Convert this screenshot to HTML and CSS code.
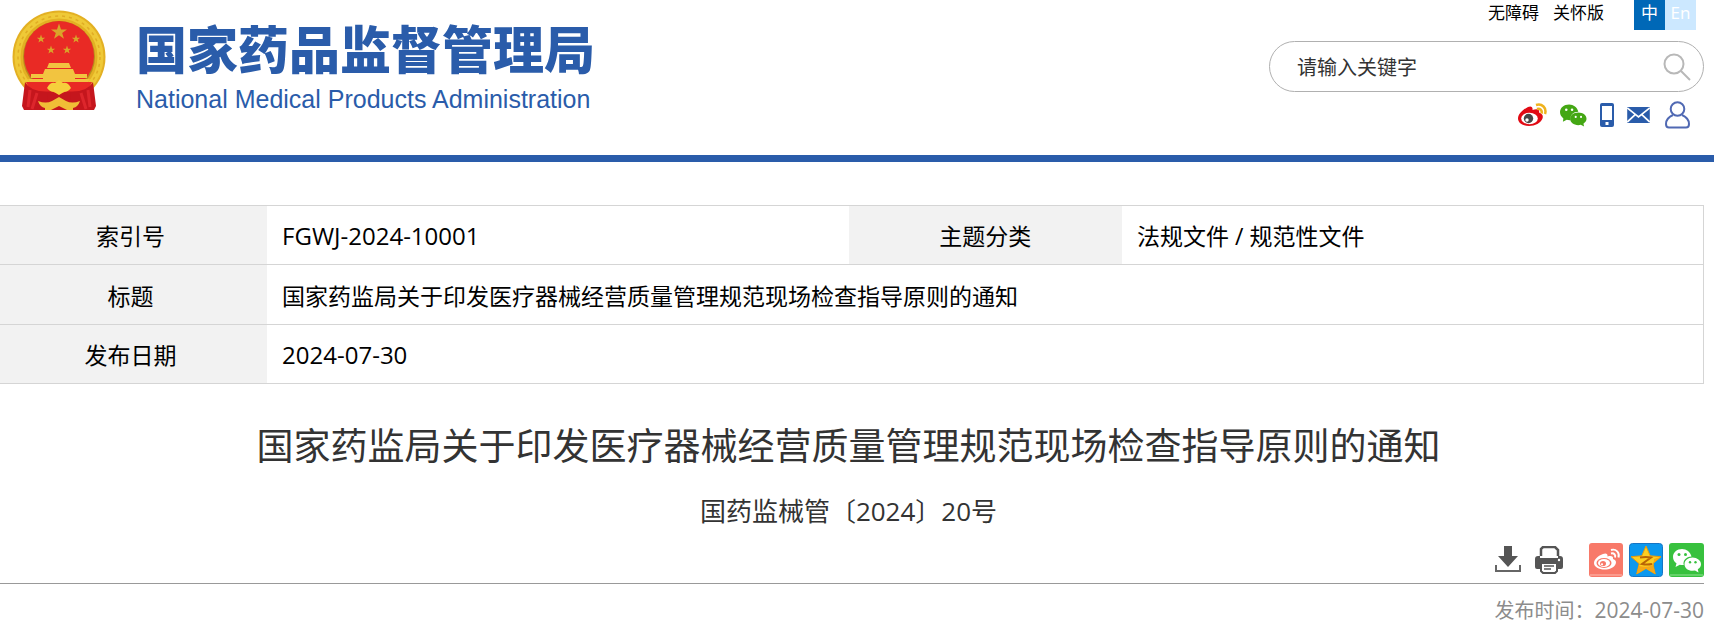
FILE: index.html
```html
<!DOCTYPE html>
<html lang="zh-CN">
<head>
<meta charset="utf-8">
<title>国家药监局关于印发医疗器械经营质量管理规范现场检查指导原则的通知</title>
<link rel="stylesheet" href="styles.css">
</head>
<body>
<header class="site-header">
  <a class="brand" href="#">
    <svg class="emblem" viewBox="0 0 94 102" aria-hidden="true">
      <defs>
        <path id="star" d="M0-10 2.4-3.1 9.5-3.1 3.8 1.2 5.9 8.1 0 4-5.9 8.1-3.8 1.2-9.5-3.1-2.4-3.1Z"/>
      </defs>
      <circle cx="47" cy="47" r="46.5" fill="#e3b023"/>
      <circle cx="47" cy="47" r="41.500" fill="none" stroke="#efc937" stroke-width="6"/>
      <circle cx="47" cy="47" r="41" fill="none" stroke="#e0ac25" stroke-width="1.500" stroke-dasharray="3 4"/>
      <circle cx="47" cy="47" r="36" fill="#b98a1c"/>
      <circle cx="47" cy="46" r="35" fill="#e92a25"/>
      <g fill="#d9a52a">
        <use href="#star" transform="translate(47 22) scale(.84)"/>
        <use href="#star" transform="translate(29 29) scale(.44)"/>
        <use href="#star" transform="translate(64 29) scale(.44)"/>
        <use href="#star" transform="translate(39 40) scale(.44)"/>
        <use href="#star" transform="translate(55 40) scale(.44)"/>
      </g>
      <path d="M37 53h20l2 5H35zM33 59h28l2 5H31zM31 64h32v6H31zM19 64h56v4H19zM16 69h62l-2 3H18z" fill="#f2c440"/>
      <path d="M14 72h66l-6 12H20z" fill="#e92a25"/>
      <path d="M13 72q7 12 29 9l-4 19H12l-2-4z" fill="#c5161d"/>
      <path d="M81 72q-7 12-29 9l4 19h26l2-4z" fill="#c5161d"/>
      <path d="M18 80l-2 17M25 83l-5 16M69 83l5 16M76 80l2 17" stroke="#dd262c" stroke-width="3" fill="none"/>
      <path d="M36 83h22l2 17H34z" fill="#c5161d"/>
      <path d="M35 78q3-6 8-5l4-3 4 3q5-1 8 5-3 4-7 4l-5 3-5-3q-4 0-7-4z" fill="#f6cf3c"/>
      <path d="M26 91q8 3 14 0l7-4 7 4q6 3 14 0-2 6-7 7v2h-6l-8-4-8 4h-6v-2q-5-1-7-7z" fill="#f0bd36"/>
    </svg>
    <span class="brand-text">
      <span class="brand-cn">国家药品监督管理局</span>
      <span class="brand-en">National Medical Products Administration</span>
    </span>
  </a>
  <div class="tools">
    <nav class="top-links">
      <a href="#">无障碍</a>
      <a href="#">关怀版</a>
      <span class="langs"><a class="lang lang-on" href="#">中</a><a class="lang" href="#">En</a></span>
    </nav>
    <form class="search">
      <input class="search-input" type="text" placeholder="请输入关键字" aria-label="请输入关键字">
      <button class="search-btn" type="button" aria-label="搜索">
        <svg width="28" height="28" viewBox="0 0 28 28" fill="none" stroke="#b8b8b8" stroke-width="2"><circle cx="11" cy="11" r="9.5"/><path d="M18 18l9 9"/></svg>
      </button>
    </form>
    <nav class="social">
      <a href="#" aria-label="微博"><svg width="29" height="24" viewBox="0 0 29 24"><path d="M10 4c3-1.500 5 0 4.500 3 4-1.500 7.500-1 6.500 2.500 3 1 4.500 3 3.500 6C23 20 17 23 11 23 5 23 0 20 0 15.500 0 11 5 6.500 10 4z" fill="#e10a14"/><ellipse cx="11.500" cy="15.500" rx="8.300" ry="5.800" fill="#fff"/><circle cx="10.500" cy="15.500" r="4.700" fill="#484848"/><circle cx="9" cy="17" r="1.700" fill="#fff"/><path d="M18 2c6-2 11 3 9 9M19 6c3-1 5.500 1.500 4.500 4.500" fill="none" stroke="#efb21d" stroke-width="2.500"/></svg></a>
      <a href="#" aria-label="微信"><svg width="27" height="24" viewBox="0 0 28 24"><path d="M9.500 1C4 1 0 4.500 0 9c0 3 1.500 5 3.500 6.500L3 19l4-2q2 .5 4 .3C10 12 14 8.500 19 8.500 18 4 14 1 9.500 1z" fill="#44a714"/><path d="M19 9.500c-5 0-8.500 3-8.500 6.500s3.500 6.500 8.500 6.500l2.500-.3L25 24l-.7-3c2-1.300 3.200-3 3.200-5 0-3.500-3.500-6.500-8.500-6.500z" fill="#44a714"/><g fill="#fff"><circle cx="6.500" cy="6.500" r="1.300"/><circle cx="12.500" cy="6.500" r="1.300"/><circle cx="16.300" cy="14" r="1.100"/><circle cx="21.800" cy="14" r="1.100"/></g></svg></a>
      <a href="#" aria-label="手机"><svg width="14" height="24" viewBox="0 0 14 24"><rect width="14" height="24" rx="2" fill="#2a5caa"/><path d="M2 3h10v14H2z" fill="#fff"/><rect x="5.500" y="19" width="3" height="3" fill="#fff"/></svg></a>
      <a href="#" aria-label="邮箱"><svg width="23" height="16" viewBox="0 0 24 17"><path d="M0 0h24v17H0z" fill="#2a5caa"/><path d="M0 1l12 9.500L24 1M0 16l8.500-8M24 16l-8.500-8" fill="none" stroke="#fff" stroke-width="1.800"/></svg></a>
      <a class="user" href="#" aria-label="个人中心"><svg width="25" height="28" viewBox="0 0 25 28" fill="none" stroke="#5069b3" stroke-width="2"><circle cx="12.500" cy="8" r="6.800"/><path d="M8 14C3.500 16 1 19 1 23c0 2.500 1 3.500 3 3.500h17c2 0 3-1 3-3.500 0-4-2.500-7-7-9"/></svg></a>
    </nav>
  </div>
</header>
<main class="content">
  <table class="meta">
    <tr><th scope="row">索引号</th><td class="latin">FGWJ-2024-10001</td><th scope="row">主题分类</th><td>法规文件 / 规范性文件</td></tr>
    <tr class="subject"><th scope="row">标题</th><td colspan="3">国家药监局关于印发医疗器械经营质量管理规范现场检查指导原则的通知</td></tr>
    <tr><th scope="row">发布日期</th><td class="latin" colspan="3">2024-07-30</td></tr>
  </table>
  <h1 class="title">国家药监局关于印发医疗器械经营质量管理规范现场检查指导原则的通知</h1>
  <p class="doc-no">国药监械管〔2024〕20号</p>
  <div class="actions">
    <button type="button" aria-label="下载"><svg width="26" height="28" viewBox="0 0 26 28"><path d="M9 0h8v10h6L13 21 3 10h6z" fill="#555"/><path d="M1 19v6h24v-6" fill="none" stroke="#666" stroke-width="2"/></svg></button>
    <button class="print" type="button" aria-label="打印"><svg width="28" height="28" viewBox="0 0 28 28"><path d="M6 10V3l2-2h12l3 3v6" fill="#fff" stroke="#555" stroke-width="2.500"/><path d="M3 10h2v2h18v-2h2q3 0 3 3v8q0 2-2 2h-3v-6H5v6H2q-2 0-2-2v-8q0-3 3-3z" fill="#555"/><path d="M6 17h16v8l-2 2H8l-2-2z" fill="#fff" stroke="#555" stroke-width="2"/><path d="M9 20h10M9 23h7" stroke="#555" stroke-width="1.500"/><circle cx="24" cy="14" r="1.200" fill="#fff"/></svg></button>
    <a href="#" aria-label="分享到微博"><svg width="34" height="34" viewBox="0 0 34 34"><rect width="34" height="34" rx="3" fill="#f87969"/><path d="M1 32h32" stroke="#fb9b8e" stroke-width="2"/><path d="M14 11c3-1.500 5 0 4.500 2.500 3.500-1 6-.5 5.500 2.500 2.500.8 3.500 2.500 2.800 4.500-1.300 4-6.300 6-11.300 6C10 26.500 5 24 5 20c0-3.500 4.500-7.500 9-9z" fill="#fff"/><ellipse cx="15" cy="20" rx="7.500" ry="5" fill="#f87969"/><ellipse cx="15" cy="20" rx="6" ry="4" fill="#fff"/><ellipse cx="14" cy="20.500" rx="3" ry="2.600" fill="#f87969"/><circle cx="13" cy="21.300" r="1.100" fill="#fff"/><path d="M22 7c5-1.500 9 2.500 7.500 7.500M22 10.500c3-.8 5 1.500 4 4" fill="none" stroke="#fff" stroke-width="1.900"/></svg></a>
    <a href="#" aria-label="分享到QQ空间"><svg width="34" height="34" viewBox="0 0 34 34"><rect x=".5" y=".5" width="33" height="33" rx="3" fill="#0c98ee" stroke="#1675c4"/><path d="M17 3l4.200 9.800L32 13.700l-8.200 7L26.300 31 17 25.500 7.700 31l2.500-10.300L2 13.700l10.800-.9z" fill="#fdce20" stroke="#e79a0b"/><path d="M25 16l6-2-7.200 6.700L26.300 31 17 25.500 7.700 31l2-8q9 2 15-1z" fill="#f6a816"/><path d="M11 14.500q6-1 11 0l-9 6.500q5 1 10 0" fill="none" stroke="#b96505" stroke-width="2"/></svg></a>
    <a href="#" aria-label="分享到微信"><svg width="35" height="34" viewBox="0 0 35 34"><rect width="35" height="34" rx="3" fill="#38c13e"/><path d="M1 32h33" stroke="#65d269" stroke-width="2"/><path d="M13 6C8 6 4 9.500 4 14c0 3 1.500 5 3.500 6.300L6.500 24l4.300-2.200q2 .4 4 .2C13.500 18 17 13.500 22.500 13.500 21.500 9 17.500 6 13 6z" fill="#fff"/><path d="M23.500 14.500c-4.500 0-8 3-8 6.700s3.500 6.600 8 6.600l2.500-.3 3.500 2-.7-3.200c2-1.200 3.200-3 3.200-5.100 0-3.700-4-6.700-8.500-6.700z" fill="#fff"/><g fill="#38c13e"><circle cx="10" cy="11.500" r="1.500"/><circle cx="16.500" cy="11.500" r="1.500"/><circle cx="21" cy="19.300" r="1.200"/><circle cx="26.500" cy="19.300" r="1.200"/></g></svg></a>
  </div>
  <p class="pub">发布时间：<time datetime="2024-07-30">2024-07-30</time></p>
</main>
</body>
</html>
```
FILE: styles.css
```css
* { box-sizing: border-box; }
body {
  margin: 0;
  background: #fff;
  color: #000;
  font-family: "Open Sans", "Noto Sans CJK SC", sans-serif;
  overflow-x: hidden;
}
a { color: inherit; text-decoration: none; }
svg { display: block; }
button { border: 0; padding: 0; background: none; cursor: pointer; }

.site-header {
  display: flex;
  justify-content: space-between;
  align-items: flex-start;
  min-height: 162px;
  padding: 0 10px 0 12px;
  border-bottom: 7px solid #2a5caa;
}
.brand { display: flex; gap: 30px; padding-top: 10px; color: #2a5caa; }
.emblem { width: 94px; height: 102px; }
.brand-text { display: flex; flex-direction: column; }
.brand-cn { font: 900 51px/75px "Noto Sans CJK SC", sans-serif; }
.brand-en { font: 400 25px/28px "Liberation Sans", Arial, sans-serif; }

.tools { display: flex; flex-direction: column; align-items: flex-end; width: 435px; }
.top-links {
  display: flex;
  gap: 14px;
  padding-right: 8px;
  font-size: 17px;
  line-height: 26px;
}
.langs { display: flex; margin-left: 16px; }
.lang {
  width: 31px;
  height: 30px;
  background: #cce8ff;
  color: #fff;
  text-align: center;
}
.lang-on { background: #0068b7; }
.search {
  display: flex;
  align-items: center;
  width: 100%;
  height: 51px;
  margin-top: 11px;
  padding: 0 12px 0 27px;
  border: 1px solid #b0b0b0;
  border-radius: 26px;
}
.search-input {
  flex: 1;
  min-width: 0;
  border: 0;
  padding: 2px 0 0;
  outline: 0;
  background: none;
  font: 20px/30px "Open Sans", "Noto Sans CJK SC", sans-serif;
}
.search-input::placeholder { color: #333; opacity: 1; }
.social {
  display: flex;
  align-items: center;
  gap: 13px;
  height: 28px;
  margin-top: 9px;
  padding-right: 14px;
}
.user { margin-left: 2px; }

.content { margin: 43px 10px 0 -7px; }
.meta {
  width: 100%;
  table-layout: fixed;
  border-collapse: collapse;
  border: 1px solid #d5d5d5;
  font-size: 23px;
  line-height: 34px;
}
.meta tr { height: 59px; border-bottom: 1px solid #d5d5d5; }
.meta .subject { height: 60px; }
.meta th { width: 16%; padding: 2px 0 0; background: #f2f2f2; font-weight: 400; }
.meta td { padding: 2px 15px 0; }
.meta .latin { font-size: 24px; }

.title {
  margin: 34px 0 0;
  color: #333;
  font-size: 37px;
  font-weight: 400;
  line-height: 56px;
  text-align: center;
}
.doc-no {
  margin: 17px 0 0;
  color: #333;
  font-size: 26px;
  line-height: 40px;
  text-align: center;
}
.actions {
  display: flex;
  justify-content: flex-end;
  align-items: center;
  gap: 6px;
  margin-top: 12px;
  padding-bottom: 6px;
  border-bottom: 1px solid #999;
}
.print { margin: 0 20px 0 8px; }
.pub {
  margin: 11px 0 0;
  color: #8c8c8c;
  font-size: 20px;
  line-height: 30px;
  text-align: right;
}
.pub time { font-size: 21px; }
```
